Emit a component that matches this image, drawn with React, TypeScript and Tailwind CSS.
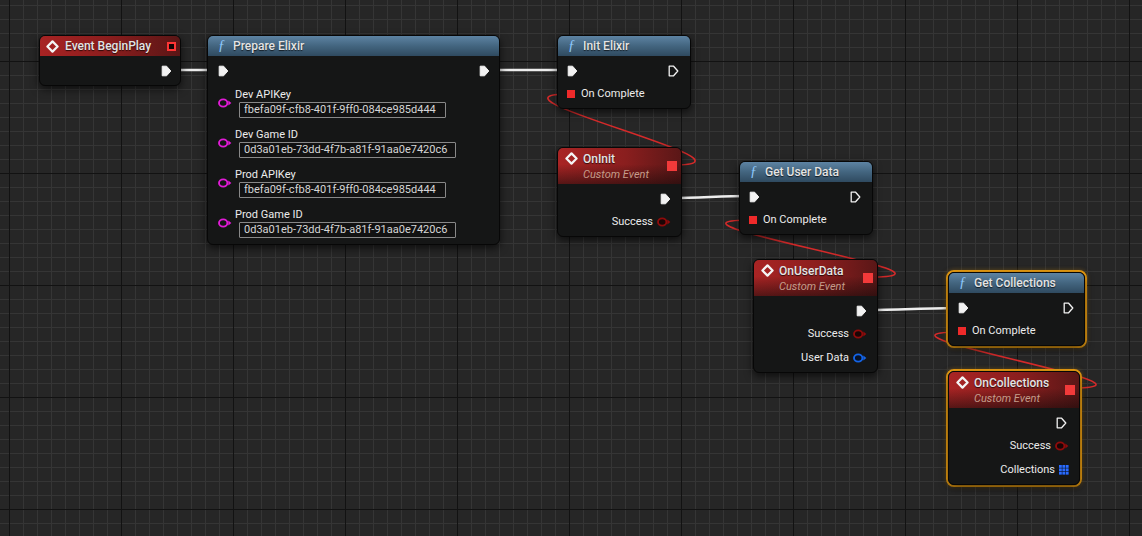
import clsx from "clsx";
import type { ReactNode } from "react";

type PinKind = "filled" | "hollow" | null;

function ExecPin({ kind }: { kind: "filled" | "hollow" }) {
  return (
    <svg width="11" height="12" viewBox="0 0 11 12" className="shrink-0">
      <path
        d="M1.2 1.2 H5.6 L9.8 6 L5.6 10.8 H1.2 Z"
        fill={kind === "filled" ? "#f2f2f2" : "none"}
        stroke="#f2f2f2"
        strokeWidth={kind === "filled" ? 1 : 1.3}
        strokeLinejoin="round"
      />
    </svg>
  );
}

function DataPin({ color, fill = "none" }: { color: string; fill?: string }) {
  return (
    <svg width="14" height="10" viewBox="0 0 14 10" className="shrink-0">
      <ellipse cx="5.2" cy="5" rx="4.2" ry="3.6" fill={fill} stroke={color} strokeWidth="1.9" />
      <path d="M10.3 2.6 L13.4 5 L10.3 7.4 Z" fill={color} />
    </svg>
  );
}

function ArrayPin() {
  const cells = [0, 1, 2];
  return (
    <svg width="10" height="10" viewBox="0 0 10 10" className="shrink-0">
      <rect x="0" y="0" width="10" height="10" fill="#0b1630" />
      {cells.map((r) =>
        cells.map((c) => (
          <rect key={`${r}${c}`} x={c * 3.4} y={r * 3.4} width="2.8" height="2.8" fill="#2a6cff" />
        ))
      )}
    </svg>
  );
}

function DelegateBox({ hollow = false }: { hollow?: boolean }) {
  return hollow ? (
    <span className="block h-[9px] w-[9px] shrink-0 border-2 border-[#ff3535] bg-[#120606]" />
  ) : (
    <span className="block h-[10px] w-[10px] shrink-0 bg-[#f23a3a]" />
  );
}

function Diamond() {
  return (
    <svg width="13" height="13" viewBox="0 0 13 13" className="shrink-0">
      <path d="M6.5 1.4 L11.6 6.5 L6.5 11.6 L1.4 6.5 Z" fill="none" stroke="#f4f4f4" strokeWidth="2.2" strokeLinejoin="round" />
    </svg>
  );
}

function Node({
  className,
  kind,
  title,
  delegate,
  selected = false,
  children,
}: {
  className: string;
  kind: "event" | "custom" | "func";
  title: string;
  delegate?: "hollow" | "filled";
  selected?: boolean;
  children: ReactNode;
}) {
  return (
    <div
      className={clsx(
        "absolute",
        className,
        selected && "rounded-[8px] border-2 border-[#f2a312] shadow-[0_0_4px_rgba(240,160,20,0.35)]"
      )}
    >
      <div className="overflow-hidden rounded-[6px] border border-[#070707] bg-[#151616] shadow-[0_3px_8px_rgba(0,0,0,0.65)]">
        {kind === "func" && (
          <div className="flex h-[20px] items-center bg-[linear-gradient(180deg,#5d83a3_0%,#43657f_50%,#2f4a60_100%)] pl-[10px]">
            <span className="w-[15px] font-['Liberation_Serif',serif] text-[14px] italic leading-none text-[#8fcaff]">ƒ</span>
            <span className="text-[12px] font-medium text-[#e4e4e4] [text-shadow:0_1px_1px_rgba(0,0,0,0.7)]">{title}</span>
          </div>
        )}
        {kind === "event" && (
          <div className="flex h-[20px] items-center justify-between bg-[linear-gradient(90deg,#a82323_0%,#8a1d1d_50%,#5a1616_100%)] pl-[6px] pr-[4px]">
            <div className="flex items-center gap-[6px]">
              <Diamond />
              <span className="text-[12px] font-medium text-[#e4e4e4] [text-shadow:0_1px_1px_rgba(0,0,0,0.7)]">{title}</span>
            </div>
            {delegate && <DelegateBox hollow={delegate === "hollow"} />}
          </div>
        )}
        {kind === "custom" && (
          <div className="flex h-[36px] items-center justify-between bg-[linear-gradient(180deg,rgba(0,0,0,0)_45%,rgba(18,10,10,0.55)_100%),linear-gradient(90deg,#a92424_0%,#8a1e1e_55%,#5a1717_100%)] pl-[7px] pr-[4px]">
            <div className="flex flex-col">
              <div className="flex h-[16px] items-center gap-[5px]">
                <Diamond />
                <span className="text-[12px] font-medium text-[#e4e4e4] [text-shadow:0_1px_1px_rgba(0,0,0,0.7)]">{title}</span>
              </div>
              <span className="pl-[18px] text-[11px] italic leading-[15px] text-[#c49c8a]">Custom Event</span>
            </div>
            {delegate && <DelegateBox hollow={delegate === "hollow"} />}
          </div>
        )}
        <div className="pb-[2px] pt-[4px]">{children}</div>
      </div>
    </div>
  );
}

function ExecRow({ left, right, pl = "pl-[9px]", pr = "pr-[10px]" }: { left: PinKind; right: PinKind; pl?: string; pr?: string }) {
  return (
    <div className={clsx("flex h-[22px] items-center justify-between", pl, pr)}>
      {left ? <ExecPin kind={left} /> : <span />}
      {right ? <ExecPin kind={right} /> : <span />}
    </div>
  );
}

function OnCompleteRow() {
  return (
    <div className="flex h-[24px] items-center gap-[6px] pl-[9px]">
      <span className="block h-[8px] w-[8px] bg-[#ee2a2a]" />
      <span className="text-[11px] text-[#ececec]">On Complete</span>
    </div>
  );
}

function OutRow({ label, children }: { label: string; children: ReactNode }) {
  return (
    <div className="flex h-[24px] items-center justify-end gap-[4px] pr-[10px]">
      <span className="text-[11px] text-[#ececec]">{label}</span>
      {children}
    </div>
  );
}

const fields = [
  { label: "Dev APIKey", value: "fbefa09f-cfb8-401f-9ff0-084ce985d444", w: "w-[207px]" },
  { label: "Dev Game ID", value: "0d3a01eb-73dd-4f7b-a81f-91aa0e7420c6", w: "w-[217px]" },
  { label: "Prod APIKey", value: "fbefa09f-cfb8-401f-9ff0-084ce985d444", w: "w-[207px]" },
  { label: "Prod Game ID", value: "0d3a01eb-73dd-4f7b-a81f-91aa0e7420c6", w: "w-[217px]" },
];

function curve(x0: number, y0: number, x1: number, y1: number, k: number) {
  return `M${x0} ${y0} C${x0 + k} ${y0}, ${x1 - k} ${y1}, ${x1} ${y1}`;
}

export default function App() {
  return (
    <div className="relative h-[536px] w-[1142px] overflow-hidden bg-[#262626] font-['Roboto','Liberation_Sans',sans-serif]">
      <svg className="absolute inset-0" width="1142" height="536">
        <defs>
          <pattern id="minor" width="14" height="14" x="9" y="5" patternUnits="userSpaceOnUse">
            <rect x="0" y="0" width="14" height="1" fill="#353535" />
            <rect x="0" y="0" width="1" height="14" fill="#353535" />
          </pattern>
          <pattern id="major" width="112" height="112" x="9" y="61" patternUnits="userSpaceOnUse">
            <rect x="0" y="0" width="112" height="1" fill="#121212" />
            <rect x="0" y="0" width="1" height="112" fill="#121212" />
          </pattern>
        </defs>
        <rect width="1142" height="536" fill="url(#minor)" />
        <rect width="1142" height="536" fill="url(#major)" />

        {/* exec wires */}
        <g stroke="#ededed" strokeWidth="2.6" fill="none">
          <path d={curve(172, 70, 218, 70, 20)} />
          <path d={curve(490, 70, 567, 70, 30)} />
          <path d={curve(671, 198, 749, 196, 30)} />
          <path d={curve(867, 310, 958, 308, 30)} />
        </g>

        {/* delegate wires */}
        <g stroke="#d42a2a" strokeWidth="1.6" fill="none">
          <path d={curve(673, 165, 570, 94, 106)} />
          <path d={curve(869, 277, 752, 220, 124)} />
          <path d={curve(1070, 388, 961, 332, 122)} />
        </g>
      </svg>

      <Node className="left-[39px] top-[35px] w-[142px]" kind="event" title="Event BeginPlay" delegate="hollow">
        <div className="pb-[1px]">
          <ExecRow left={null} right="filled" pr="pr-[8px]" />
        </div>
      </Node>

      <Node className="left-[207px] top-[35px] w-[293px]" kind="func" title="Prepare Elixir">
        <ExecRow left="filled" right="filled" pl="pl-[10px]" pr="pr-[9px]" />
        <div className="mt-[6px] flex flex-col gap-[10px] pb-[4px]">
          {fields.map((f) => (
            <div key={f.label} className="flex items-center pl-[10px]">
              <DataPin color="#e21ad8" />
              <div className="ml-[3px] flex flex-col">
                <span className="h-[14px] text-[11px] leading-[14px] text-[#ececec]">{f.label}</span>
                <span
                  className={clsx(
                    "ml-[4px] h-[16px] rounded-[1px] border border-[#888888] bg-[#121212] pl-[4px] text-[11px] leading-[14px] text-[#d6d6d6]",
                    f.w
                  )}
                >
                  {f.value}
                </span>
              </div>
            </div>
          ))}
        </div>
      </Node>

      <Node className="left-[557px] top-[35px] w-[134px]" kind="func" title="Init Elixir">
        <ExecRow left="filled" right="hollow" pr="pr-[11px]" />
        <OnCompleteRow />
      </Node>

      <Node className="left-[557px] top-[147px] w-[125px]" kind="custom" title="OnInit" delegate="filled">
        <ExecRow left={null} right="filled" />
        <OutRow label="Success">
          <DataPin color="#8e0b0b" fill="#1a0505" />
        </OutRow>
      </Node>

      <Node className="left-[739px] top-[161px] w-[134px]" kind="func" title="Get User Data">
        <ExecRow left="filled" right="hollow" pr="pr-[11px]" />
        <OnCompleteRow />
      </Node>

      <Node className="left-[753px] top-[259px] w-[125px]" kind="custom" title="OnUserData" delegate="filled">
        <ExecRow left={null} right="filled" />
        <OutRow label="Success">
          <DataPin color="#8e0b0b" fill="#1a0505" />
        </OutRow>
        <OutRow label="User Data">
          <DataPin color="#1464e6" fill="#06122a" />
        </OutRow>
      </Node>

      <Node className="left-[946px] top-[270px] w-[141px]" kind="func" title="Get Collections" selected>
        <ExecRow left="filled" right="hollow" />
        <OnCompleteRow />
      </Node>

      <Node className="left-[946px] top-[369px] w-[136px]" kind="custom" title="OnCollections" delegate="filled" selected>
        <ExecRow left={null} right="hollow" pr="pr-[12px]" />
        <OutRow label="Success">
          <DataPin color="#8e0b0b" fill="#1a0505" />
        </OutRow>
        <OutRow label="Collections">
          <ArrayPin />
        </OutRow>
      </Node>
    </div>
  );
}
